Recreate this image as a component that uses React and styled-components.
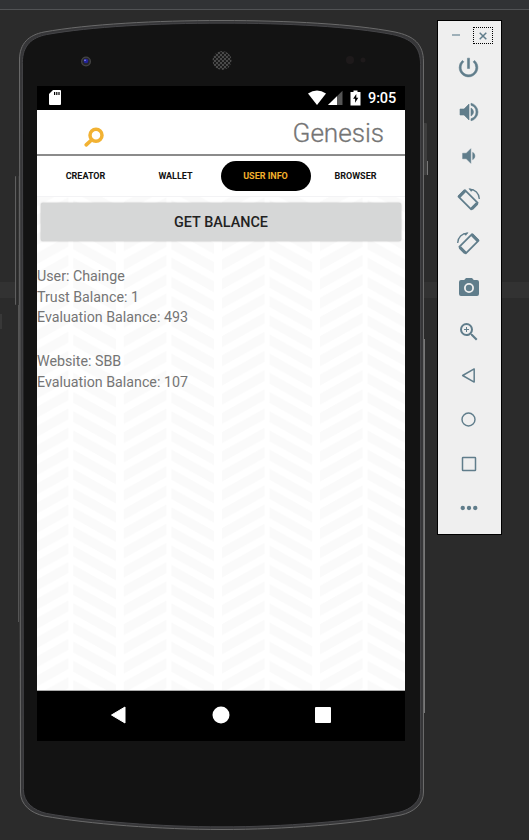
import React from 'react';
import styled, { createGlobalStyle } from 'styled-components';

const Global = createGlobalStyle`
  * { box-sizing: border-box; }
  html, body { margin: 0; background: #2b2b2b; overflow: hidden; }
  body { font-family: Roboto, "Liberation Sans", sans-serif; }
`;

const Desktop = styled.div`
  width: 529px;
  height: 840px;
  overflow: hidden;
  display: flex;
  flex-direction: column;
  background: linear-gradient(#323232, #323232) 0 282px / 100% 16px no-repeat, #2b2b2b;
`;

const EditorStrip = styled.div`
  height: 10px;
  flex: none;
  background: #313335;
  border-bottom: 1px solid #515355;
`;

const Workspace = styled.div`
  flex: 1;
  display: flex;
  align-items: flex-start;
`;

const GutterMark = styled.div`
  width: 2px;
  height: 15px;
  margin-top: 304px;
  background: #383838;
`;

const Phone = styled.div`
  position: relative;
  width: 414px;
  height: 830px;
  margin-left: 12px;
  padding: 76px 0 0 23px;
`;

const Body = styled.svg`
  position: absolute;
  left: 0;
  top: 0;
`;

const Screen = styled.div`
  position: relative;
  width: 368px;
  height: 655px;
  display: flex;
  flex-direction: column;
  background: #fff;
`;

const StatusBar = styled.div`
  height: 24px;
  padding: 0 9px 0 12px;
  display: flex;
  align-items: center;
  background: #000;
  color: #fff;
`;

const CardIcon = styled.svg`
  margin-bottom: 1px;
`;

const StatusIcons = styled.svg`
  margin-left: auto;
`;

const Clock = styled.span`
  width: 28px;
  margin-left: 7px;
  font-size: 14.5px;
  font-weight: 500;
  line-height: 24px;
  padding-top: 1px;
  letter-spacing: -0.1px;
  white-space: nowrap;
`;

const Header = styled.header`
  height: 46px;
  padding: 0 21px 0 46px;
  display: flex;
  justify-content: space-between;
  border-bottom: 2px solid #8b8b8b;
`;

const SearchIcon = styled.svg`
  margin-top: 16px;
`;

const Title = styled.h1`
  margin: 0;
  color: #757575;
  font-size: 26.2px;
  font-weight: 300;
  line-height: 46px;
  letter-spacing: -0.05px;
  -webkit-text-stroke: 0.3px #757575;
`;

const Tabs = styled.nav`
  height: 41px;
  padding: 5px 4px 0 3.5px;
  display: grid;
  grid-template-columns: repeat(4, 90px);
  border-bottom: 1px solid #f3f3f5;
`;

const Tab = styled.div`
  height: 30px;
  border-radius: 15px;
  text-align: center;
  font-size: 9px;
  font-weight: 700;
  line-height: 31px;
  color: ${(p) => (p.$active ? '#f2b02c' : '#111')};
  background: ${(p) => (p.$active ? '#000' : 'transparent')};
`;

const Content = styled.main`
  position: relative;
  flex: 1;
  padding: 6px 4px 0 3.5px;
`;

const Backdrop = styled.svg`
  position: absolute;
  left: 0;
  top: 0;
`;

const BalanceButton = styled.button`
  position: relative;
  display: block;
  width: 360px;
  height: 38px;
  padding: 1px 0 0 1px;
  border: 0;
  border-radius: 2px;
  background: #d6d7d7;
  box-shadow: 0 0 2px rgba(0, 0, 0, 0.35);
  color: #222;
  font: 500 14.4px/38px Roboto, sans-serif;
`;

const Account = styled.section`
  position: relative;
  margin: ${(p) => (p.$first ? '25px' : '23.7px')} 0 0 -3.5px;
  color: #757575;
  font-size: 14.25px;
  line-height: 20.5px;
`;

const NavBar = styled.footer`
  height: 51px;
  border-top: 1px solid #aaa;
  padding: 0 30px 2px 30px;
  display: grid;
  grid-template-columns: repeat(3, 102.5px);
  place-items: center;
  background: #000;
`;

const Toolbar = styled.aside`
  width: 65px;
  height: 515px;
  margin: 10px 0 0 9px;
  border: 1px solid #000;
  background: #efefef;
  color: #607d8b;
`;

const WindowButtons = styled.div`
  height: 25px;
  padding: 6px 8px 0 14px;
  display: flex;
  justify-content: space-between;
`;

const Minimise = styled.span`
  width: 8px;
  height: 2px;
  margin-top: 7px;
  background: #9fb0b9;
`;

const Close = styled.span`
  width: 20px;
  height: 17px;
  display: grid;
  place-items: center;
  border: 1px dotted #000;
`;

const Tool = styled.div`
  height: 44px;
  padding: 0 2px 1px 0;
  display: grid;
  place-items: center;
`;

const ICONS = {
  power: <path fill="currentColor" d="M13 3h-2v10h2V3zm4.83 2.17-1.42 1.42A6.92 6.92 0 0 1 19 12a7 7 0 1 1-11.42-5.42L6.17 5.17A8.93 8.93 0 0 0 3 12a9 9 0 1 0 14.83-6.83z" stroke="currentColor" strokeWidth=".5" />,
  volumeUp: <path fill="currentColor" d="M3 9v6h4l5 5V4L7 9H3zm13.5 3A4.5 4.5 0 0 0 14 7.97v8.05A4.5 4.5 0 0 0 16.5 12zM14 3.23v2.06a7 7 0 0 1 0 13.42v2.06a9 9 0 0 0 0-17.54z" stroke="currentColor" strokeWidth=".6" />,
  volumeDown: <path fill="currentColor" d="M18.5 12A4.5 4.5 0 0 0 16 7.97v8.05A4.5 4.5 0 0 0 18.5 12zM5 9v6h4l5 5V4L9 9H5z" stroke="currentColor" strokeWidth=".5" />,
  rotateLeft: <RotateShape />,
  rotateRight: <g transform="translate(24 0) scale(-1 1)"><RotateShape /></g>,
  camera: <path fill="currentColor" fillRule="evenodd" d="M9 2 7.2 4H4a2 2 0 0 0-2 2v12a2 2 0 0 0 2 2h16a2 2 0 0 0 2-2V6a2 2 0 0 0-2-2h-3.2L15 2H9zm3 15a5 5 0 1 1 0-10 5 5 0 0 1 0 10zm0-1.8a3.2 3.2 0 1 0 0-6.4 3.2 3.2 0 0 0 0 6.4z" />,
  zoom: <path fill="currentColor" d="M15.5 14h-.79l-.28-.27A6.47 6.47 0 0 0 16 9.5 6.5 6.5 0 1 0 9.5 16c1.61 0 3.09-.59 4.23-1.57l.27.28v.79l5 4.99L20.49 19l-4.99-5zm-6 0C7.01 14 5 11.99 5 9.5S7.01 5 9.5 5 14 7.01 14 9.5 11.99 14 9.5 14zm2.5-4h-2v2H9v-2H7V9h2V7h1v2h2v1z" />,
  back: <path fill="none" stroke="currentColor" strokeWidth="1.7" strokeLinejoin="round" d="M5.300 12 18.500 4.500v15z" />,
  home: <circle cx="12" cy="12" r="8.2" fill="none" stroke="currentColor" strokeWidth="1.8" />,
  overview: <rect x="4.2" y="4.2" width="15.6" height="15.6" rx=".7" fill="none" stroke="currentColor" strokeWidth="1.8" />,
  more: <g fill="currentColor"><circle cx="4.5" cy="12" r="2.6" /><circle cx="12" cy="12" r="2.6" /><circle cx="19.5" cy="12" r="2.6" /></g>,
};

function RotateShape() {
  return (
    <g fill="none" stroke="currentColor">
      <path strokeWidth="1.8" strokeLinejoin="round" d="M8.300 2.200 1.500 9 14.800 22.300l6.800-6.800z" />
      <path strokeWidth="3.2" d="M8.500 2.800 2.100 9.200M21 16 15.300 21.700" />
      <path strokeWidth="1.4" d="M13 1.200A10.300 10.300 0 0 1 23.300 11.500" />
      <path fill="currentColor" stroke="none" d="m12 .3 5.300 1.200-2.600 2.500z" />
    </g>
  );
}

const TOOLS = [
  ['power', 25], ['volumeUp', 24], ['volumeDown', 22], ['rotateLeft', 23], ['rotateRight', 23],
  ['camera', 24], ['zoom', 24], ['back', 21], ['home', 19], ['overview', 20], ['more', 20],
];

const PHONE_EDGE = 'M5.500 50C5.500 33 15 25 30 22C75 14 142 10.500 208 10.500S340 14 381 22C400 26 409.500 34 409.500 52V782C409.500 794 400 802 387 805C340 814 270 819.500 208 819.500S75 814 30 806C17 803 6.500 795 6.500 782Z';

function PhoneBody() {
  return (
    <Body width="414" height="830" viewBox="0 0 414 830">
      <defs>
        <linearGradient id="key" x1="0" x2="1">
          <stop offset="0" stopColor="#777" />
          <stop offset=".35" stopColor="#222" />
          <stop offset="1" stopColor="#444" />
        </linearGradient>
        <pattern id="mesh" width="4" height="4" patternUnits="userSpaceOnUse">
          <rect width="4" height="4" fill="#4a4a4a" />
          <circle cx="1" cy="1" r="1.1" fill="#151515" />
          <circle cx="3" cy="3" r="1.1" fill="#151515" />
        </pattern>
      </defs>
      <rect x="1" y="166" width="5" height="129" rx="1" fill="url(#key)" />
      <path d="M4.500 295V612" stroke="#555" />
      <rect x="409" y="113" width="4" height="52" rx="1" fill="#3e3e3e" />
      <path d="M413.500 151V165M410.500 329V703" stroke="#777" />
      <path d={PHONE_EDGE} fill="#363638" stroke="#6a6a6a" />
      <path d={PHONE_EDGE} fill="#131313" stroke="#454548" strokeWidth="1" transform="translate(3 2.700) scale(.9855 .9935)" />
      <circle cx="72" cy="51.500" r="5" fill="#444" />
      <circle cx="72" cy="51.500" r="3.700" fill="#25252c" />
      <circle cx="72" cy="51" r="2.300" fill="#24249a" />
      <circle cx="71" cy="50.300" r=".8" fill="#99f" />
      <circle cx="208" cy="50.500" r="9.500" fill="url(#mesh)" />
      <circle cx="336" cy="50" r="4" fill="#1e1a1b" />
      <circle cx="349" cy="50" r="2.500" fill="#1e1a1b" />
    </Body>
  );
}

function Herringbone() {
  return (
    <Backdrop width="368" height="493" viewBox="37 197 368 493">
      <defs>
        <pattern id="herringbone" x="73.300" y="0" width="98.100" height="19.200" patternUnits="userSpaceOnUse">
          <g fill="#fafafa">
            {[-57.6, -38.4, -19.2, 0, 19.2].map((y) => (
              <React.Fragment key={y}>
                <path d={`M0 ${y + 18.9}l42.500 23.800v-11L0 ${y + 7.9}z`} />
                <path d={`M50.400 ${y + 40.1}l42.600 -23.800v-11L50.400 ${y + 29.1}z`} />
              </React.Fragment>
            ))}
          </g>
        </pattern>
      </defs>
      <rect x="37" y="197" width="368" height="493" fill="url(#herringbone)" />
    </Backdrop>
  );
}

export default function App() {
  return (
    <>
      <Global />
      <Desktop>
        <EditorStrip />
        <Workspace>
          <GutterMark />
          <Phone>
            <PhoneBody />
            <Screen>
              <StatusBar>
                <CardIcon width="12" height="15" viewBox="0 0 12 15">
                  <path fill="#fff" d="M4 0h7q1 0 1 1v13q0 1-1 1H1q-1 0-1-1V4z" />
                  <path stroke="#000" strokeWidth="1.2" d="M5.600 2v3M7.800 2v3M10 2v3" />
                </CardIcon>
                <StatusIcons width="53" height="16" viewBox="0 0 53 16">
                  <path fill="#fff" d="M0 3.500Q9 -2.500 18 3.500L9 15z" />
                  <path fill="#555" d="M20 15 34.500.8V15z" />
                  <path fill="#fff" d="M20 15 29 6.200V15z" />
                  <path fill="#fff" d="M45.500.5h4V2H52.500v13.500h-10V2h3z" />
                  <path fill="#000" d="m48.300 4-3.200 4.700h2v4l3.200-5h-2z" />
                </StatusIcons>
                <Clock>9:05</Clock>
              </StatusBar>
              <Header>
                <SearchIcon width="22" height="22" viewBox="0 0 22 22">
                  <circle cx="13" cy="9.300" r="6" fill="none" stroke="#f2b233" strokeWidth="3.500" />
                  <path d="M8.500 14 3.200 18.800" stroke="#f2b233" strokeWidth="3.700" strokeLinecap="round" />
                </SearchIcon>
                <Title>Genesis</Title>
              </Header>
              <Tabs>
                <Tab>CREATOR</Tab>
                <Tab>WALLET</Tab>
                <Tab $active>USER INFO</Tab>
                <Tab>BROWSER</Tab>
              </Tabs>
              <Content>
                <Herringbone />
                <BalanceButton>GET BALANCE</BalanceButton>
                <Account $first>
                  <div>User: Chainge</div>
                  <div>Trust Balance: 1</div>
                  <div>Evaluation Balance: 493</div>
                </Account>
                <Account>
                  <div>Website: SBB</div>
                  <div>Evaluation Balance: 107</div>
                </Account>
              </Content>
              <NavBar>
                <svg width="16" height="18" viewBox="0 0 16 18"><path fill="#fff" stroke="#fff" strokeLinejoin="round" d="M1.500 9 15 1v16z" /></svg>
                <svg width="18" height="18"><circle cx="9" cy="9" r="8.500" fill="#fff" /></svg>
                <svg width="16" height="16"><rect width="16" height="16" rx="1" fill="#fff" /></svg>
              </NavBar>
            </Screen>
          </Phone>
          <Toolbar>
            <WindowButtons>
              <Minimise />
              <Close>
                <svg width="8" height="8" viewBox="0 0 8 8"><path d="m.7.7 6.600 6.600M7.300.7.7 7.300" stroke="#607d8b" strokeWidth="1.500" /></svg>
              </Close>
            </WindowButtons>
            {TOOLS.map(([name, size]) => (
              <Tool key={name}>
                <svg width={size} height={size} viewBox="0 0 24 24">{ICONS[name]}</svg>
              </Tool>
            ))}
          </Toolbar>
        </Workspace>
      </Desktop>
    </>
  );
}
